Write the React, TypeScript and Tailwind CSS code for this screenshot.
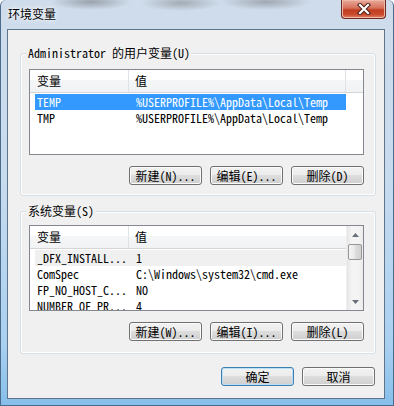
import React from "react";

const userVars = [
  { name: "TEMP", value: "%USERPROFILE%\\AppData\\Local\\Temp" },
  { name: "TMP", value: "%USERPROFILE%\\AppData\\Local\\Temp" },
];

const sysVars = [
  { name: "_DFX_INSTALL...", value: "1" },
  { name: "ComSpec", value: "C:\\Windows\\system32\\cmd.exe" },
  { name: "FP_NO_HOST_C...", value: "NO" },
  { name: "NUMBER_OF_PR...", value: "4" },
];

function Button({ label, isDefault }: { label: string; isDefault?: boolean }) {
  return (
    <button
      className={`w-[73px] h-[19px] rounded-[3px] border text-[12px] leading-[17px] text-black flex items-center justify-center bg-[linear-gradient(#f2f2f2_0%,#ebebeb_50%,#dddddd_50%,#cfcfcf_100%)] ${
        isDefault
          ? "border-[#3c7fb1] shadow-[inset_0_0_0_1px_#b9e0f6]"
          : "border-[#707070] shadow-[inset_0_0_0_1px_#fbfbfb]"
      }`}
    >
      {label}
    </button>
  );
}

function Header({ withDivider }: { withDivider?: boolean }) {
  return (
    <div className="flex h-[23px] border-b border-[#d5d5d5] bg-[linear-gradient(#ffffff_0%,#ffffff_45%,#f5f6f7_46%,#f1f2f4_100%)] text-[12px] leading-[22px]">
      <div className="w-[99px] shrink-0 pl-[7px] border-r border-[#dfe2e7]">变量</div>
      <div
        className={`pl-[6px] ${withDivider ? "w-[217px] shrink-0 border-r border-[#dfe2e7]" : "flex-1"}`}
      >
        值
      </div>
      {withDivider && <div className="flex-1" />}
    </div>
  );
}

function Row({ name, value, state }: { name: string; value: string; state?: "active" | "inactive" }) {
  const bg =
    state === "active" ? "bg-[#3399ff] text-white" : state === "inactive" ? "bg-[#f0f0f0] text-black" : "text-black";
  return (
    <div className={`ml-[5px] w-[311px] h-[16px] flex text-[12px] leading-[16px] whitespace-nowrap ${bg}`}>
      <div className="w-[101px] shrink-0 pl-[2px]">{name}</div>
      <div>{value}</div>
    </div>
  );
}

function Arrow({ up }: { up?: boolean }) {
  return (
    <svg width="7" height="4" viewBox="0 0 7 4">
      <path d={up ? "M0 4 L3.5 0 L7 4 Z" : "M0 0 L3.5 4 L7 0 Z"} fill="#6a6f7a" />
    </svg>
  );
}

function GroupBox({ legend, children }: { legend: string; children: React.ReactNode }) {
  return (
    <div className="relative h-[143px] border border-[#d5dfe5] rounded-[3px] shadow-[inset_0_0_0_1px_#ffffff]">
      <span className="absolute left-[5px] -top-[8px] px-[2px] bg-[#f0f0f0] text-[12px] leading-[14px] whitespace-nowrap">
        {legend}
      </span>
      {children}
    </div>
  );
}

export default function App() {
  return (
    <div className="w-[394px] h-[406px] overflow-hidden rounded-t-[6px] border-x border-b border-[#4b6b8c] bg-[linear-gradient(180deg,#cfdceb_0%,#c7dbef_45%,#a9d0f0_85%,#86bfea_100%)] font-['Noto_Sans_Mono_CJK_SC','Noto_Sans_CJK_SC',monospace] text-black">
      {/* title bar */}
      <div className="h-[29px] flex justify-between pr-[7px] bg-[radial-gradient(ellipse_40px_8px_at_90px_2px,#9aa3ad,transparent),radial-gradient(ellipse_40px_8px_at_180px_3px,#a3acb5,transparent),radial-gradient(ellipse_45px_8px_at_265px_2px,#a0a8b2,transparent)]">
        <div className="pl-[7px] pt-[7px] text-[12px] leading-[14px] font-['Noto_Sans_CJK_SC',sans-serif] [text-shadow:0_0_6px_#ffffff,0_0_3px_#ffffff]">
          环境变量
        </div>
        <div className="w-[45px] h-[19px] rounded-b-[4px] border border-t-0 border-[#6a2a1f] bg-[linear-gradient(#e9a99b_0%,#d7705a_45%,#c23d22_55%,#c9492b_80%,#e0836a_100%)] shadow-[inset_0_0_0_1px_#f0b8a8] flex items-center justify-center">
          <svg width="14" height="12" viewBox="0 0 14 12">
            <path d="M3 2 L11 10 M11 2 L3 10" stroke="#4a1f18" strokeWidth="4.2" strokeLinecap="square" />
            <path d="M3 2 L11 10 M11 2 L3 10" stroke="#ffffff" strokeWidth="2.2" strokeLinecap="square" />
          </svg>
        </div>
      </div>

      {/* client area */}
      <div className="ml-[6px] w-[378px] h-[370px] border border-[#60748a] bg-[#f0f0f0] pl-[12px] pr-[8px] pt-[23px]">
        <GroupBox legend="Administrator 的用户变量(U)">
          <div className="pl-[8px] pt-[15px]">
            <div className="w-[335px] h-[86px] border border-[#828790] bg-white overflow-hidden">
              <Header withDivider />
              <div className="pt-[1px]">
                <Row name={userVars[0].name} value={userVars[0].value} state="active" />
                <Row name={userVars[1].name} value={userVars[1].value} />
              </div>
            </div>
            <div className="mt-[11px] w-[335px] flex justify-end gap-[8px]">
              <Button label="新建(N)..." />
              <Button label="编辑(E)..." />
              <Button label="删除(D)" />
            </div>
          </div>
        </GroupBox>

        <div className="mt-[15px]">
          <GroupBox legend="系统变量(S)">
            <div className="pl-[8px] pt-[13px]">
              <div className="w-[335px] h-[86px] border border-[#828790] bg-white overflow-hidden flex">
                <div className="w-[316px] shrink-0 overflow-hidden">
                  <Header />
                  <div className="pt-[1px]">
                    {sysVars.map((v, i) => (
                      <Row key={v.name} name={v.name} value={v.value} state={i === 0 ? "inactive" : undefined} />
                    ))}
                  </div>
                </div>
                <div className="w-[17px] flex flex-col bg-[linear-gradient(90deg,#e6e6e6,#f4f4f4_30%,#f4f4f4_70%,#ececec)] border-l border-[#eeeeee]">
                  <div className="h-[17px] flex items-center justify-center">
                    <Arrow up />
                  </div>
                  <div className="flex-1">
                    <div className="mt-[1px] mx-[1px] h-[16px] rounded-[2px] border border-[#979797] bg-[linear-gradient(90deg,#f4f4f4,#e8e8e8_50%,#dcdcdc_51%,#d2d2d2)]" />
                  </div>
                  <div className="h-[17px] flex items-center justify-center">
                    <Arrow />
                  </div>
                </div>
              </div>
              <div className="mt-[11px] w-[335px] flex justify-end gap-[8px]">
                <Button label="新建(W)..." />
                <Button label="编辑(I)..." />
                <Button label="删除(L)" />
              </div>
            </div>
          </GroupBox>
        </div>

        <div className="mt-[13px] flex justify-end gap-[8px] pr-[1px]">
          <Button label="确定" isDefault />
          <Button label="取消" />
        </div>
      </div>
    </div>
  );
}
